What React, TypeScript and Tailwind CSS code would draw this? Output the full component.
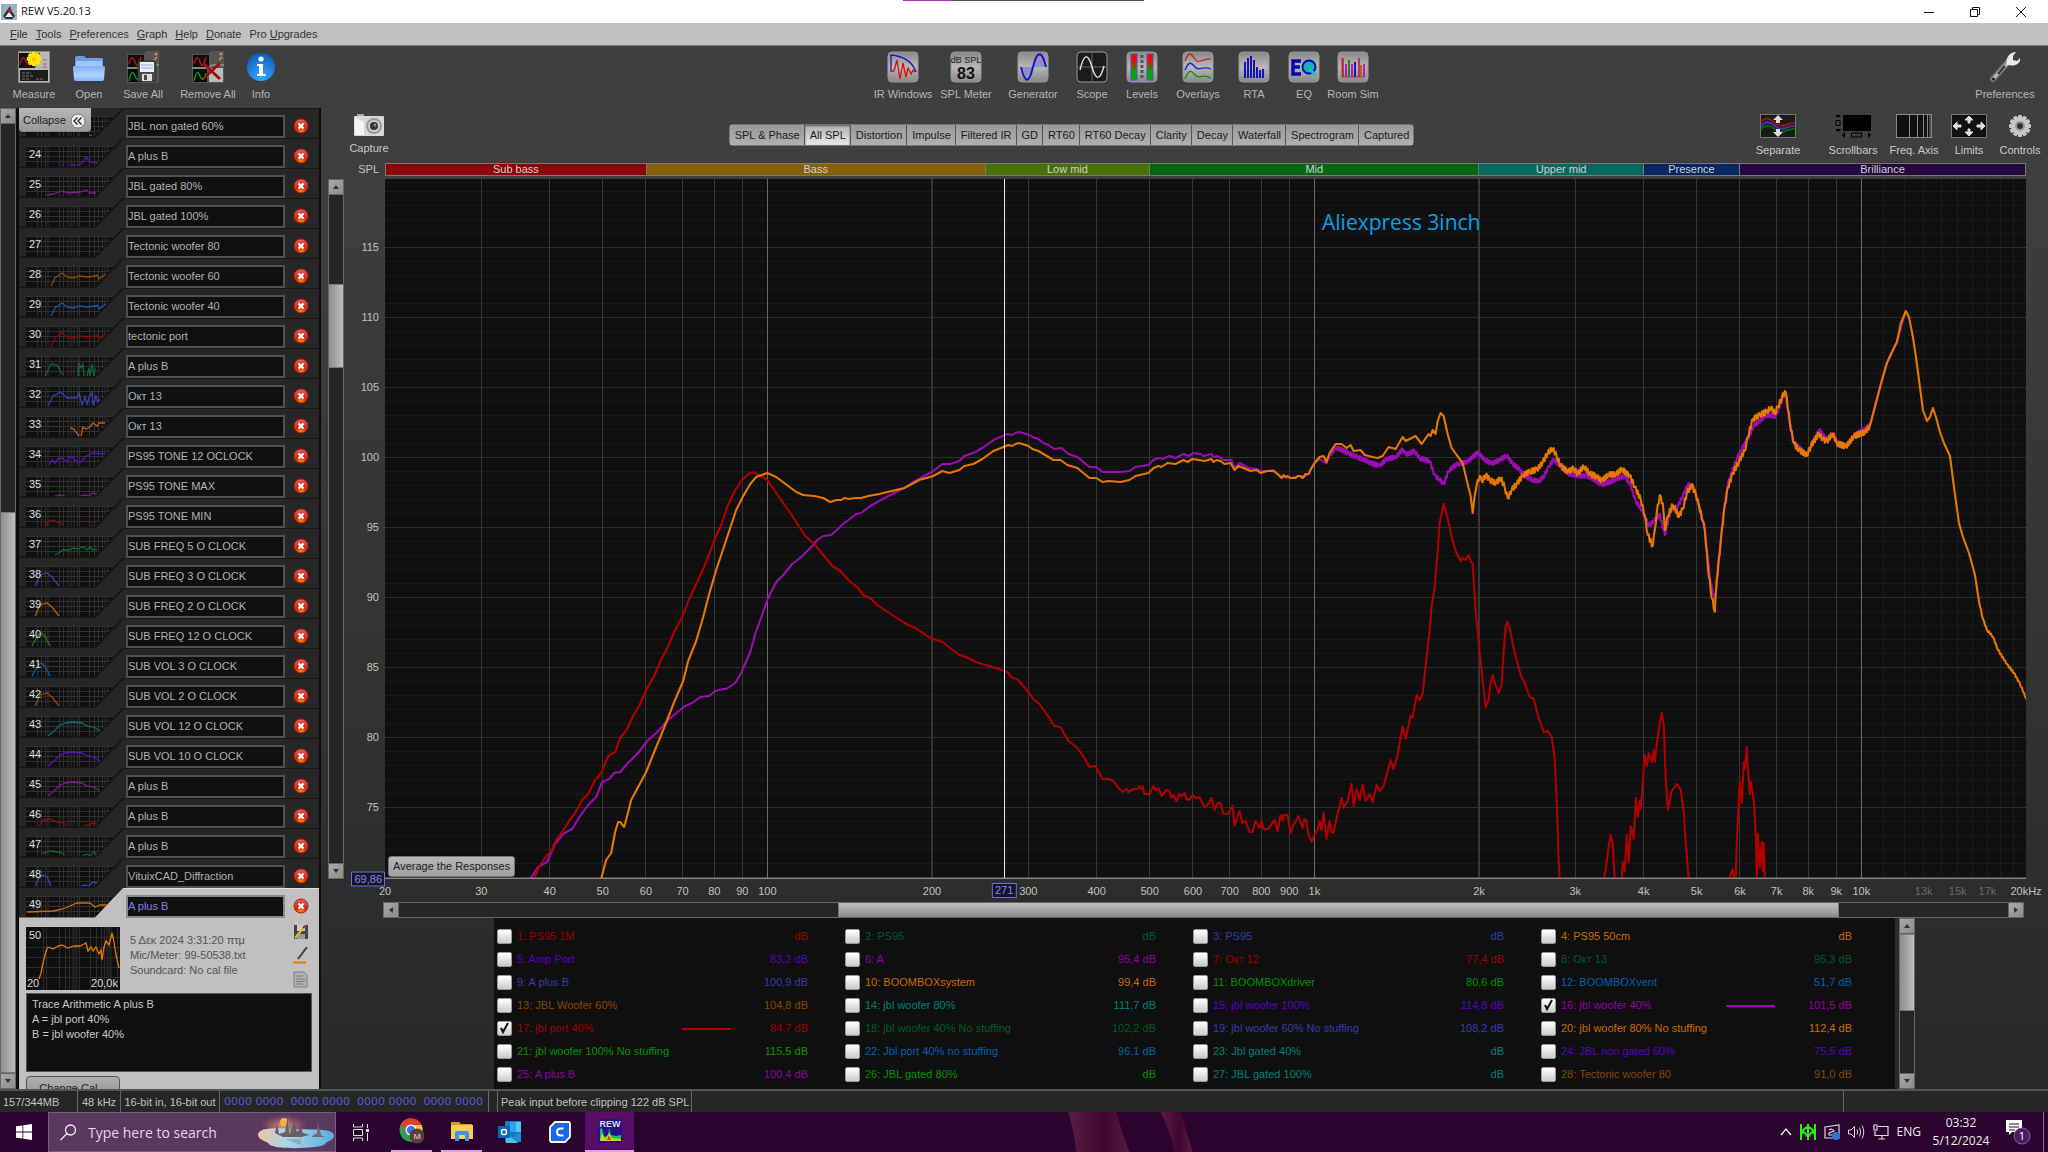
import { ReactNode } from "react";
import clsx from "clsx";

const TOP_DB = 119.86;
const BOTTOM_DB = 69.86;

const freqToPercent = (f: number) => (Math.log10(f / 20) / 3) * 100;
const dbToPercent = (db: number) =>
    ((TOP_DB - db) / (TOP_DB - BOTTOM_DB)) * 100;

const RED = "#b00000";
const ORANGE = "#e67800";
const MAGENTA = "#9b0cb4";

// traces are "x,y" pairs on a 1640 x 700 plot
const redMain =
    "149,700 154,688 159,680 166,672 171,661 177,653 184,642 190,634 197,621 203,615 210,601 216,594 223,577 230,573 235,559 242,550 248,537 254,527 261,511 269,497 275,483 282,469 289,453 298,436 304,420 311,405 318,390 324,375 330,359 336,346 342,328 349,313 356,302 362,296 367,293 374,296 382,301 391,314 405,334 420,357 429,365 438,376 447,387 454,391 465,403 472,408 478,416 485,419 492,426 510,438 521,445 530,449 545,459 557,463 566,470 574,476 581,478 588,482 597,485 610,489 622,493 627,499 632,500 643,513 648,520 654,525 662,536 669,547 675,548 683,562 692,569 699,579 704,588 710,587 717,600 723,600 728,602 732,608 737,613 741,610 743,613 748,610 752,610 754,607 756,610 757,607 759,615 764,615 768,607 770,611 773,609 776,617 781,611 784,612 786,619 788,616 791,622 794,615 796,617 799,614 801,620 804,621 807,616 810,619 814,618 819,628 822,626 826,619 829,631 832,624 835,624 838,635 842,635 847,627 849,647 854,632 857,644 860,642 864,653 867,653 870,642 874,649 876,642 878,650 883,650 886,645 889,641 892,652 895,636 897,641 898,636 902,636 905,654 907,648 913,637 917,649 919,640 921,642 923,656 926,663 929,655 932,651 934,642 936,651 938,634 941,660 944,642 946,653 948,654 951,639 956,619 958,629 962,622 966,605 968,627 971,610 974,621 977,606 980,622 984,615 987,623 991,606 994,612 998,607 1002,592 1005,581 1008,590 1012,576 1015,558 1017,547 1020,560 1025,537 1027,538 1031,516 1034,521 1037,515 1040,487 1044,451 1046,427 1049,408 1052,372 1054,344 1058,325 1062,339 1066,358 1070,372 1075,382 1077,379 1080,381 1083,376 1085,382 1087,385 1090,433 1094,474 1100,528 1103,521 1105,503 1107,496 1110,506 1113,514 1116,506 1118,472 1120,447 1122,443 1124,449 1129,474 1135,496 1139,504 1144,518 1148,520 1153,539 1158,553 1162,552 1166,558 1169,580 1171,622 1173,683 1174,700";
const redBumps = [
    "1218,700 1220,690 1223,667 1225,656 1227,665 1229,700",
    "1236,700 1237,683 1239,692 1241,656 1243,683 1245,647 1248,660 1250,619 1252,638 1254,622 1255,630 1257,604 1259,576 1261,587 1263,574 1266,583 1268,571 1269,583 1271,565 1274,544 1276,534 1278,546 1280,601 1282,631 1286,612 1291,605 1295,611 1298,633 1300,665 1303,700",
    "1343,700 1347,690 1348,699 1350,697 1351,662 1354,603 1356,624 1358,583 1359,590 1361,568 1362,589 1364,615 1365,603 1368,622 1370,658 1371,700 1372,655 1374,689 1376,663 1377,692 1378,664 1379,700",
];
const orangeTrace =
    "216,700 221,681 226,674 230,653 233,643 235,643 239,648 241,641 246,621 253,608 261,593 269,573 276,556 282,541 289,523 298,502 303,482 311,462 318,438 324,415 331,391 338,370 345,349 351,331 358,317 365,305 371,298 382,294 391,298 403,307 411,313 418,316 429,317 438,319 445,323 451,321 456,321 459,319 464,320 470,319 476,319 483,317 494,315 519,309 534,301 548,297 557,292 564,294 574,291 579,287 588,285 597,280 608,272 623,266 627,267 630,265 633,264 637,265 643,267 647,270 653,272 663,278 668,281 675,281 682,286 692,289 698,294 704,299 711,299 717,303 723,302 735,303 744,301 750,297 763,294 768,289 773,287 776,288 782,284 790,285 798,281 802,283 807,280 813,281 819,282 826,280 828,283 831,281 835,282 839,285 845,284 849,291 853,287 858,289 865,292 871,291 875,294 882,292 888,292 892,295 896,299 898,296 900,298 902,297 905,299 910,299 912,297 915,297 917,299 920,295 923,295 926,289 930,283 934,278 938,277 941,283 944,274 950,265 956,265 961,269 965,266 968,272 975,271 979,276 987,278 992,279 997,277 1003,268 1010,270 1017,258 1020,262 1030,257 1036,265 1043,255 1045,257 1047,251 1050,255 1052,242 1055,234 1058,237 1062,255 1066,269 1071,276 1077,284 1082,305 1085,317 1087,334 1089,317 1092,301 1094,297 1096,302 1100,296 1104,301 1110,305 1115,299 1119,308 1122,319 1126,310 1131,305 1137,297 1144,293 1151,290 1157,283 1162,274 1167,270 1171,278 1175,287 1182,292 1188,289 1192,295 1198,288 1204,295 1211,297 1216,301 1223,296 1230,296 1236,290 1244,296 1249,308 1255,321 1259,337 1262,356 1267,367 1269,351 1271,333 1274,316 1277,324 1279,351 1282,337 1287,326 1293,338 1297,330 1301,314 1306,305 1310,315 1313,326 1317,342 1319,351 1322,387 1325,413 1329,433 1331,401 1335,362 1338,333 1342,308 1347,294 1353,283 1359,272 1362,258 1367,240 1374,235 1381,233 1385,229 1389,235 1392,228 1396,219 1399,212 1401,219 1404,244 1408,264 1413,271 1421,277 1425,267 1433,254 1437,260 1441,262 1447,255 1451,265 1460,267 1468,257 1479,254 1484,247 1490,224 1496,201 1501,184 1506,173 1511,163 1515,144 1520,132 1523,138 1527,158 1530,178 1534,208 1537,231 1541,242 1544,238 1547,229 1550,238 1554,253 1558,264 1564,277 1568,308 1573,344 1577,358 1583,374 1589,396 1593,422 1597,440 1601,451 1607,458 1612,471 1621,485 1628,494 1634,505 1641,522";
const magentaTrace =
    "145,700 153,688 162,683 170,665 178,655 187,650 195,637 203,626 211,618 217,603 224,600 229,594 235,593 242,585 253,574 262,562 271,554 282,542 291,534 300,527 307,524 315,518 324,517 330,512 338,510 341,510 350,504 356,494 365,473 371,452 378,433 382,421 391,403 398,396 407,385 416,378 427,367 432,361 438,357 446,356 458,345 471,335 476,334 485,327 503,317 519,309 528,303 548,292 557,285 565,285 574,282 579,277 590,273 597,269 610,260 622,255 627,256 630,254 634,253 644,256 647,258 653,260 658,264 663,266 669,270 676,269 683,275 692,278 698,283 704,288 711,288 717,293 735,293 744,292 750,288 763,286 768,281 773,279 777,280 784,277 790,279 798,275 803,277 808,274 815,275 818,277 826,275 828,278 832,277 838,281 846,281 849,289 854,284 863,289 872,290 875,292 882,292 888,291 892,295 896,298 905,299 915,297 917,299 923,295 929,283 934,280 940,284 944,276 950,269 963,274 972,278 984,284 994,286 1001,280 1010,279 1017,270 1020,275 1029,272 1034,280 1044,282 1049,296 1054,300 1058,305 1063,292 1072,285 1082,282 1092,274 1099,281 1106,284 1114,281 1121,277 1127,285 1134,290 1139,296 1146,301 1153,303 1159,296 1163,287 1168,280 1175,288 1182,295 1201,297 1216,305 1230,301 1239,297 1245,306 1250,322 1256,331 1263,347 1268,342 1274,335 1279,356 1285,331 1292,328 1297,317 1302,305 1307,307 1310,315 1313,326 1317,342 1319,351 1322,380 1325,405 1329,422 1331,400 1335,360 1338,332 1342,304 1351,280 1356,270 1362,260 1368,246 1380,237 1390,237 1399,213 1404,244 1408,264 1421,276 1433,251 1441,261 1447,254 1451,265 1460,268 1468,257 1484,246 1501,184 1511,163 1520,131";

// fills the stretch between two x positions with measurement noise
function addNoise(trace: string, from: number, to: number, amp: number) {
    const points = trace.split(" ").map((p) => p.split(",").map(Number));
    const out: string[] = [];
    let n = 0;
    points.forEach(([x, y], i) => {
        const next = points[i + 1];
        out.push(`${x},${y}`);
        if (!next || x < from || x > to) return;
        const steps = Math.max(1, Math.round(next[0] - x));
        for (let s = 1; s < steps; s++) {
            n++;
            const t = s / steps;
            const wobble =
                (n % 2 ? 1 : -1) * amp * (0.5 + 0.5 * Math.abs(Math.sin(n * 1.7)));
            out.push(
                `${(x + (next[0] - x) * t).toFixed(1)},${(y + (next[1] - y) * t + wobble).toFixed(1)}`
            );
        }
    });
    return out.join(" ");
}

const bands = [
    { name: "Sub bass", from: 20, to: 60, color: "bg-[#8b0808]" },
    { name: "Bass", from: 60, to: 250, color: "bg-[#846108]" },
    { name: "Low mid", from: 250, to: 500, color: "bg-[#4a7008]" },
    { name: "Mid", from: 500, to: 2000, color: "bg-[#066616]" },
    { name: "Upper mid", from: 2000, to: 4000, color: "bg-[#086860]" },
    { name: "Presence", from: 4000, to: 6000, color: "bg-[#08265f]" },
    { name: "Brilliance", from: 6000, to: 20000, color: "bg-[#260840]" },
];

const freqLabels: [number, string][] = [
    [20, "20"], [30, "30"], [40, "40"], [50, "50"], [60, "60"], [70, "70"],
    [80, "80"], [90, "90"], [100, "100"], [200, "200"], [300, "300"],
    [400, "400"], [500, "500"], [600, "600"], [700, "700"], [800, "800"],
    [900, "900"], [1000, "1k"], [2000, "2k"], [3000, "3k"], [4000, "4k"],
    [5000, "5k"], [6000, "6k"], [7000, "7k"], [8000, "8k"], [9000, "9k"],
    [10000, "10k"], [13000, "13k"], [15000, "15k"], [17000, "17k"],
    [20000, "20kHz"],
];

const wide = "M32 28L36 20L43 15L48 19L54 20L60 18L68 19L76 18L78 17L80 21L87 16";
const hump = "M16 28L21 17L28 15L33 19L40 28";
const leftHump = "M13 28L19 17L23 15L27 20L31 28";
const vol = "M29 28L35 23L41 17L47 15L53 14L63 15L68 18L75 19L81 23";

const measurements = [
    { no: "", name: "JBL non gated 60%", color: "#00827a", d: "M70 28L73 27" },
    { no: "24", name: "A plus B", color: "#5a10c8", d: "M43 28L45 27M52 28L54 26L57 28M59 27L63 25L67 19L71 24L78 25" },
    { no: "25", name: "JBL gated 80%", color: "#8a1496", d: "M28 27L34 26L43 23L49 25L61 24L67 22L71 25L77 25" },
    { no: "26", name: "JBL gated 100%", color: "#8a1496", d: "" },
    { no: "27", name: "Tectonic woofer 80", color: "#8a1496", d: "" },
    { no: "28", name: "Tectonic woofer 60", color: "#8c4a08", d: wide },
    { no: "29", name: "Tectonic woofer 40", color: "#0a5cae", d: wide },
    { no: "30", name: "tectonic port", color: "#8c0808", d: wide },
    { no: "31", name: "A plus B", color: "#08693a", d: "M26 28L32 16L38 17L44 27M59 28L60 15L62 20L64 16L65 28M68 28L70 20L71 28L73 16L75 28L76 20" },
    { no: "32", name: "Окт 13", color: "#3c3cae", d: "M29 28L34 18L42 14L48 20L58 20L60 15L63 27L66 19L68 26L70 20L73 14L74 27L77 18L79 24L81 21" },
    { no: "33", name: "Окт 13", color: "#b46208", d: "M51 20L55 21L60 28M62 28L64 19L67 21L71 19L74 15L78 18L80 15L86 15" },
    { no: "34", name: "PS95 TONE 12 OCLOCK", color: "#5a10c8", d: "M30 27L33 22L36 25L39 21L43 20L48 24L50 19L53 19L58 24L62 24L66 19L73 15L86 16" },
    { no: "35", name: "PS95 TONE MAX", color: "#7a1486", d: "M36 28L41 27L46 28M61 28L66 27L71 28L73 25L78 26" },
    { no: "36", name: "PS95 TONE MIN", color: "#960808", d: "M26 28L29 24L34 22L45 27M73 28L76 27" },
    { no: "37", name: "SUB FREQ 5 O CLOCK", color: "#08693a", d: "M36 27L44 22L50 22L54 20L58 21L64 19L68 22L71 19L74 22L78 21" },
    { no: "38", name: "SUB FREQ 3 O CLOCK", color: "#3c3cae", d: hump },
    { no: "39", name: "SUB FREQ 2 O CLOCK", color: "#b46208", d: hump },
    { no: "40", name: "SUB FREQ 12 O CLOCK", color: "#0a8a0a", d: leftHump },
    { no: "41", name: "SUB VOL 3 O CLOCK", color: "#0a5cae", d: leftHump },
    { no: "42", name: "SUB VOL 2 O CLOCK", color: "#8c4a08", d: hump },
    { no: "43", name: "SUB VOL 12 O CLOCK", color: "#086e68", d: vol },
    { no: "44", name: "SUB VOL 10 O CLOCK", color: "#5a10c8", d: vol },
    { no: "45", name: "A plus B", color: "#8a1496", d: vol },
    { no: "46", name: "A plus B", color: "#960808", d: "M20 28L24 22L31 21L38 24L45 25L47 28M64 28L67 27L70 28L73 25L78 26" },
    { no: "47", name: "A plus B", color: "#08693a", d: "M23 26L31 23L40 24L46 27M64 28L67 26L71 28L75 24L78 27" },
    { no: "48", name: "VituixCAD_Diffraction", color: "#3c3cae", d: "M16 28L20 20L24 17L28 19L32 28M62 28L67 27L70 28L74 24L78 25" },
    { no: "49", name: "A plus B", color: "#c86c08", d: "M8 24L34 23L44 21L51 18L58 15L66 15L71 15L76 19L81 17L88 17" },
];

const palette = {
    red: "text-[#a00000]",
    green: "text-[#055a2e]",
    blue: "text-[#3a3aac]",
    orange: "text-[#cc6a00]",
    violet: "text-[#5a00c8]",
    magenta: "text-[#9400a6]",
    lime: "text-[#009400]",
    azure: "text-[#0060b4]",
    brown: "text-[#884600]",
    teal: "text-[#008078]",
};

type Legend = { name: string; value: string; color: keyof typeof palette; line?: string };

const legend: Legend[] = [
    { name: "1: PS95 1M", value: "dB", color: "red" },
    { name: "2: PS95", value: "dB", color: "green" },
    { name: "3: PS95", value: "dB", color: "blue" },
    { name: "4: PS95 50cm", value: "dB", color: "orange" },
    { name: "5: Amp Port", value: "83,2 dB", color: "violet" },
    { name: "6: A", value: "95,4 dB", color: "magenta" },
    { name: "7: Окт 12", value: "77,4 dB", color: "red" },
    { name: "8: Окт 13", value: "95,3 dB", color: "green" },
    { name: "9: A plus B", value: "100,9 dB", color: "blue" },
    { name: "10: BOOMBOXsystem", value: "99,4 dB", color: "orange" },
    { name: "11: BOOMBOXdriver", value: "80,6 dB", color: "lime" },
    { name: "12: BOOMBOXvent", value: "51,7 dB", color: "azure" },
    { name: "13: JBL Woofer 60%", value: "104,8 dB", color: "brown" },
    { name: "14: jbl woofer 80%", value: "111,7 dB", color: "teal" },
    { name: "15: jbl woofer 100%", value: "114,8 dB", color: "violet" },
    { name: "16: jbl woofer 40%", value: "101,5 dB", color: "magenta", line: "bg-[#a800c0]" },
    { name: "17: jbl port 40%", value: "84,7 dB", color: "red", line: "bg-[#b40000]" },
    { name: "18: jbl woofer 40% No stuffing", value: "102,2 dB", color: "green" },
    { name: "19: jbl woofer 60% No stuffing", value: "108,2 dB", color: "blue" },
    { name: "20: jbl woofer 80% No stuffing", value: "112,4 dB", color: "orange" },
    { name: "21: jbl woofer 100% No stuffing", value: "115,5 dB", color: "lime" },
    { name: "22: Jbl port 40% no stuffing", value: "96,1 dB", color: "azure" },
    { name: "23: Jbl gated 40%", value: "dB", color: "teal" },
    { name: "24: JBL non gated 60%", value: "75,5 dB", color: "violet" },
    { name: "25: A plus B", value: "100,4 dB", color: "magenta" },
    { name: "26: JBL gated 80%", value: "dB", color: "lime" },
    { name: "27: JBL gated 100%", value: "dB", color: "teal" },
    { name: "28: Tectonic woofer 80", value: "91,0 dB", color: "brown" },
];

/* ---------- toolbar icons ---------- */

function MiniPanel({ children }: { children?: ReactNode }) {
    return (
        <svg width="32" height="32" viewBox="0 0 32 32">
            <path d="M0 3H16L20 0H32V32H0Z" fill="#555" />
            <rect x="1" y="4" width="16" height="12" fill="#0c0c0c" />
            <path d="M2 13C4 5 6 5 8 11S12 14 14 6" fill="none" stroke="#c01010" strokeWidth="1.5" />
            <path d="M0 17H16L20 14H32" stroke="#b8b8b8" fill="none" />
            <rect x="1" y="18" width="14" height="13" fill="#0c0c0c" />
            <path d="M2 30C4 20 6 20 8 25S12 29 14 22" fill="none" stroke="#109010" strokeWidth="1.5" />
            <circle cx="29" cy="3" r="1.5" fill="#d08080" />
            <path d="M27 9l3-3" stroke="#c8a020" strokeWidth="1.5" />
            {children}
        </svg>
    );
}

function MeasureIcon() {
    return (
        <svg width="32" height="32" viewBox="0 0 32 32">
            <rect x=".5" y=".5" width="31" height="31" fill="#b8b8b8" stroke="#8a8a8a" />
            <path d="M1 2H22L17 17H1Z" fill="#111" />
            <path d="M2 14C4 5 6 5 8 10S13 16 16 8" fill="none" stroke="#b01010" strokeWidth="1.5" />
            <rect x="2" y="19" width="28" height="11" fill="#1c1c1c" />
            <path d="M4 22h9M4 25h12M4 28h8M18 28h7" stroke="#777" strokeDasharray="3 1" />
            <circle cx="28" cy="3" r="1.5" fill="#f0a0a0" />
            <path d="M25 9h4M25 13h4M25 16h4" stroke="#a06060" />
            <g fill="#ffe600">
                <circle cx="16" cy="8" r="5" />
                {[0, 45, 90, 135, 180, 225, 270, 315].map((a) => (
                    <circle key={a} cx="16" cy="3" r="2.4" transform={`rotate(${a} 16 8)`} />
                ))}
            </g>
            <circle cx="16" cy="8" r="2" fill="#ffb800" />
        </svg>
    );
}

function OpenIcon() {
    return (
        <svg width="32" height="32" viewBox="0 0 32 32">
            <defs>
                <linearGradient id="folder" x1="0" y1="0" x2="0" y2="1">
                    <stop offset="0" stopColor="#7db0f8" />
                    <stop offset=".6" stopColor="#b0d2ff" />
                    <stop offset="1" stopColor="#82b2f4" />
                </linearGradient>
            </defs>
            <path d="M2 6L4 5H11L13 7H29Q30 7 30 9V20H2Z" fill="#6a9ce8" />
            <path d="M3 10H29V18H3Z" fill="#a4c4f4" />
            <path d="M0 16Q0 15 2 15H30Q32 15 32 16L31 28Q31 30 29 30H3Q1 30 1 28Z" fill="url(#folder)" />
        </svg>
    );
}

function InfoIcon() {
    return (
        <svg width="32" height="32" viewBox="0 0 32 32">
            <defs>
                <radialGradient id="info" cx=".5" cy=".85" r=".9">
                    <stop offset="0" stopColor="#38a8ff" />
                    <stop offset="1" stopColor="#0858b8" />
                </radialGradient>
            </defs>
            <circle cx="16" cy="16" r="14" fill="url(#info)" />
            <circle cx="16" cy="8" r="2.6" fill="#fff" />
            <path d="M12 13H18V23H20.500V25H12V23H14V15H12Z" fill="#fff" />
        </svg>
    );
}

function Tile({ children, dark }: { children: ReactNode; dark?: boolean }) {
    return (
        <svg width="32" height="32" viewBox="0 0 32 32">
            <defs>
                <linearGradient id="tile" x1="0" y1="0" x2="0" y2="1">
                    <stop offset="0" stopColor="#888" />
                    <stop offset=".5" stopColor="#b8b8b8" />
                    <stop offset="1" stopColor="#888" />
                </linearGradient>
            </defs>
            <rect x="1" y="1" width="30" height="30" rx="4" fill={dark ? "#1c1c1c" : "url(#tile)"} stroke="#999" />
            {children}
        </svg>
    );
}

const leftTools = [
    { label: "Measure", width: "w-[60px]", icon: <MeasureIcon /> },
    { label: "Open", width: "w-[50px]", icon: <OpenIcon /> },
    {
        label: "Save All",
        width: "w-[58px]",
        icon: (
            <MiniPanel>
                <path d="M11 10H27L29 12V30H11Z" fill="#4a4a4a" stroke="#333" />
                <rect x="13" y="11" width="14" height="10" fill="#e8f0f8" />
                <path d="M14 14h12M14 17h12" stroke="#8aa8d0" />
                <rect x="15" y="23" width="10" height="7" fill="#ddd" />
                <rect x="17" y="24" width="3" height="5" fill="#444" />
            </MiniPanel>
        ),
    },
    {
        label: "Remove All",
        width: "w-[72px]",
        icon: (
            <MiniPanel>
                <rect x="17" y="17" width="14" height="14" fill="#bbb" />
                <path d="M12 13L28 28M28 12L12 27" stroke="#a01010" strokeWidth="3" />
            </MiniPanel>
        ),
    },
    { label: "Info", width: "w-[34px]", icon: <InfoIcon /> },
];

const centerTools = [
    {
        label: "IR Windows",
        width: "w-[62px]",
        icon: (
            <Tile>
                <path d="M4 21V4C16 5 25 10 29 21" fill="none" stroke="#1818c0" strokeWidth="1.3" />
                <path d="M4 20H7L10 9L13 28L16 12L19 26L21 17L24 23L26 19L28 21" fill="none" stroke="#d81010" strokeWidth="1.3" />
            </Tile>
        ),
    },
    {
        label: "SPL Meter",
        width: "w-[64px]",
        icon: (
            <Tile>
                <text x="16" y="12" textAnchor="middle" fontSize="9" fontFamily="Liberation Sans, sans-serif" fill="#222">dB SPL</text>
                <text x="16" y="28" textAnchor="middle" fontSize="16" fontWeight="bold" fontFamily="Liberation Sans, sans-serif" fill="#111">83</text>
            </Tile>
        ),
    },
    {
        label: "Generator",
        width: "w-[70px]",
        icon: (
            <Tile>
                <path d="M4 16C8 33 12 33 16 16Z" fill="#8c90c8" />
                <path d="M16 16C20 -1 25 -1 29 16Z" fill="#8c90c8" />
                <path d="M4 16C8 33 12 33 16 16S25 -1 29 16" fill="none" stroke="#1010c0" strokeWidth="1.8" />
            </Tile>
        ),
    },
    {
        label: "Scope",
        width: "w-[48px]",
        icon: (
            <Tile dark>
                <path d="M16 1V31M1 16H31" stroke="#666" />
                <path d="M4 19C8 2 12 2 16 16S24 30 28 15" fill="none" stroke="#ddd" strokeWidth="1.5" />
            </Tile>
        ),
    },
    {
        label: "Levels",
        width: "w-[52px]",
        icon: (
            <Tile>
                <defs>
                    <linearGradient id="meter" x1="0" y1="0" x2="0" y2="1">
                        <stop offset=".2" stopColor="#f00" />
                        <stop offset=".7" stopColor="#0a0" />
                    </linearGradient>
                </defs>
                <rect x="5" y="3" width="6" height="26" fill="url(#meter)" stroke="#5050d0" />
                <rect x="21" y="3" width="6" height="26" fill="url(#meter)" stroke="#5050d0" />
                <path d="M16 4V28" stroke="#555" strokeWidth="3" strokeDasharray="3 2" />
            </Tile>
        ),
    },
    {
        label: "Overlays",
        width: "w-[60px]",
        icon: (
            <Tile>
                <path d="M3 10C7 0 9 2 13 8S20 7 29 8" fill="none" stroke="#c82020" strokeWidth="1.3" />
                <path d="M3 19C7 10 9 11 13 16S20 14 29 18" fill="none" stroke="#2020c8" strokeWidth="1.3" />
                <path d="M3 28C7 18 9 19 13 24S20 22 29 27" fill="none" stroke="#109010" strokeWidth="1.3" />
            </Tile>
        ),
    },
    {
        label: "RTA",
        width: "w-[52px]",
        icon: (
            <Tile>
                <path d="M7 27V11M10 27V7M13 27V5M16 27V9M19 27V16M22 27V19M25 27V18" stroke="#1414b4" strokeWidth="2" />
            </Tile>
        ),
    },
    {
        label: "EQ",
        width: "w-[48px]",
        icon: (
            <Tile>
                <path d="M13 10H5V23H13M5 16H12" fill="none" stroke="#0808b0" strokeWidth="3.500" />
                <circle cx="21" cy="16" r="6.500" fill="#18b0b0" stroke="#0808b0" strokeWidth="2" />
                <path d="M21 18L28 24" stroke="#18c0c0" strokeWidth="3" />
            </Tile>
        ),
    },
    {
        label: "Room Sim",
        width: "w-[50px]",
        icon: (
            <Tile>
                <path d="M5 7V26H27" fill="none" stroke="#a04040" />
                <path d="M6 26V7M22 26V7" stroke="#c01818" strokeWidth="1.500" />
                <path d="M9 26V13M15 26V13M27 26V13" stroke="#c010c0" strokeWidth="2" />
                <path d="M12 26V9" stroke="#109010" strokeWidth="2" />
                <path d="M18 26V11" stroke="#1818c0" strokeWidth="2" />
                <path d="M24 26V14" stroke="#a07010" strokeWidth="2" />
            </Tile>
        ),
    },
];

const graphTools = [
    {
        label: "Separate",
        width: "w-[90px]",
        icon: (
            <svg width="36" height="24" viewBox="0 0 36 24">
                <rect x=".5" y=".5" width="35" height="23" fill="#1a1a1a" stroke="#777" />
                <path d="M1 8C8 0 12 8 18 11S28 8 35 9" fill="none" stroke="#a01010" strokeWidth="2" />
                <path d="M1 12C8 4 12 11 18 14S28 11 35 12" fill="none" stroke="#3838b0" strokeWidth="2" />
                <path d="M1 15C8 8 12 14 18 17S28 14 35 15" fill="none" stroke="#0c600c" strokeWidth="2" />
                <path d="M18 1l5 5h-3v3h-4V6h-3zM18 23l5-5h-3v-3h-4v3h-3z" fill="#ddd" />
            </svg>
        ),
    },
    {
        label: "Scrollbars",
        width: "w-[60px]",
        icon: (
            <svg width="36" height="24" viewBox="0 0 36 24">
                <rect x="8" y="1" width="28" height="16" fill="#000" />
                <path d="M3 0l3 3H0zM3 18l3-3H0zM7 21l3-3v6zM36 21l-3-3v6z" fill="#000" />
                <path d="M1 6.500h4v5H1zM16.500 19h10v4h-10z" fill="none" stroke="#000" />
            </svg>
        ),
    },
    {
        label: "Freq. Axis",
        width: "w-[62px]",
        icon: (
            <svg width="36" height="24" viewBox="0 0 36 24">
                <rect x=".5" y=".5" width="35" height="23" fill="#111" stroke="#888" />
                <path d="M13.500 0V24M21.500 0V24M27.500 0V24M31.500 0V24M34 0V24" stroke="#888" />
            </svg>
        ),
    },
    {
        label: "Limits",
        width: "w-[48px]",
        icon: (
            <svg width="36" height="24" viewBox="0 0 36 24">
                <rect x=".5" y=".5" width="35" height="23" fill="#111" stroke="#777" />
                <path d="M18 2l4 4h-3v3h-2V6h-3zM18 22l4-4h-3v-3h-2v3h-3zM2 12l4-4v3h4v2H6v3zM34 12l-4-4v3h-4v2h4v3z" fill="#ddd" stroke="#ddd" />
            </svg>
        ),
    },
    {
        label: "Controls",
        width: "w-[54px]",
        icon: (
            <svg width="24" height="24" viewBox="0 0 24 24">
                <g fill="#c8c8c8">
                    {[0, 30, 60, 90, 120, 150].map((a) => (
                        <rect key={a} x="10" y="1" width="4" height="22" rx="1" transform={`rotate(${a} 12 12)`} />
                    ))}
                    <circle cx="12" cy="12" r="9" />
                </g>
                <circle cx="12" cy="12" r="5" fill="#999" />
                <circle cx="12" cy="12" r="3" fill="#333" />
            </svg>
        ),
    },
];

const tabs = [
    "SPL & Phase", "All SPL", "Distortion", "Impulse", "Filtered IR", "GD",
    "RT60", "RT60 Decay", "Clarity", "Decay", "Waterfall", "Spectrogram",
    "Captured",
];

function ToolButton({ label, icon, width }: { label: string; icon: ReactNode; width: string }) {
    return (
        <button className={clsx("flex flex-col items-center gap-[3px] whitespace-nowrap text-[#b4b4b4]", width)}>
            {icon}
            <span className="leading-4">{label}</span>
        </button>
    );
}

function ArrowButton({ dir }: { dir: "up" | "down" | "left" | "right" }) {
    const paths = {
        up: "M1 6L4 2L7 6Z",
        down: "M1 2L4 6L7 2Z",
        left: "M6 1L2 4L6 7Z",
        right: "M2 1L6 4L2 7Z",
    };
    return (
        <button
            aria-label={`Scroll ${dir}`}
            className="flex size-4 shrink-0 items-center justify-center border border-[#666] bg-gradient-to-br from-[#a8a8a8] to-[#8c8c8c]"
        >
            <svg width="8" height="8" viewBox="0 0 8 8">
                <path d={paths[dir]} fill="#333" />
            </svg>
        </button>
    );
}

function VerticalScroll({ before, thumb, after, className }: { before: string; thumb: string; after: string; className?: string }) {
    return (
        <div className={clsx("flex w-4 shrink-0 flex-col bg-[#262626]", className)}>
            <ArrowButton dir="up" />
            <div className="flex flex-1 flex-col border-x border-[#666]">
                <div className={before} />
                <div className={clsx("border-y border-[#777] bg-gradient-to-r from-[#8c8c8c] to-[#c0c0c0]", thumb)} />
                <div className={after} />
            </div>
            <ArrowButton dir="down" />
        </div>
    );
}

function DeleteIcon() {
    return (
        <svg width="16" height="16" viewBox="0 0 16 16">
            <defs>
                <radialGradient id="del" cx=".5" cy=".9" r=".9">
                    <stop offset="0" stopColor="#ff8a10" />
                    <stop offset=".45" stopColor="#cc2808" />
                    <stop offset="1" stopColor="#e06868" />
                </radialGradient>
            </defs>
            <circle cx="8" cy="8" r="7" fill="url(#del)" stroke="#b81414" />
            <path d="M5.500 5.500L10.500 10.500M10.500 5.500L5.500 10.500" stroke="#fff" strokeWidth="2.200" />
        </svg>
    );
}

/* ---------- measurement list ---------- */

function MeasurementRow({ no, name, color, d, selected }: { no: string; name: string; color: string; d: string; selected: boolean }) {
    return (
        <li className="flex h-[30px] shrink-0">
            <svg width="105" height="30" viewBox="0 0 105 30" className="shrink-0">
                {selected && <path d="M0 29.500H76L104 0H105V30H0Z" fill="#c0c0c0" />}
                <path d="M7 8H95L76 29H7Z" fill="#101010" />
                <path
                    d="M7 8.500H94M7 13.500H90M7 18.500H86M7 23.500H81M18.500 8V29M22.500 8V29M26.500 8V29M29 8V29M40.500 8V29M44.500 8V29M49 8V29M52 8V29M55 8V29M58.500 8V29M60.500 8V29M70.500 8V29M75.500 8V29M79.500 8V24M83.500 8V20M86 8V17M89 8V14"
                    stroke="#303030"
                    fill="none"
                />
                <path d={d} fill="none" stroke={color} strokeWidth="1.300" />
                {!selected && <path d="M0 29.500H76L104 .500" fill="none" stroke="#161616" strokeWidth="2" />}
                <text x="10" y="20" fontSize="11" fill="#ddd" fontFamily="Liberation Sans, sans-serif">{no}</text>
            </svg>
            <div
                className={clsx(
                    "flex flex-1 items-center gap-2 border-t pt-[5px] pl-[2px]",
                    selected ? "border-[#e0e0e0] bg-[#c0c0c0]" : "border-[#161616]"
                )}
            >
                <input
                    aria-label={`Measurement ${no} name`}
                    defaultValue={name}
                    className={clsx(
                        "h-[23px] w-[159px] border-2 bg-[#101010]",
                        selected ? "border-[#8a8a8a] text-[#8080e0]" : "border-[#505050] text-[#b0b0b0]"
                    )}
                />
                <button aria-label="Remove measurement">
                    <DeleteIcon />
                </button>
            </div>
        </li>
    );
}

function Sidebar() {
    return (
        <aside className="flex w-[321px] shrink-0 border-r-2 border-[#0e0e0e]">
            <VerticalScroll before="h-[388px]" thumb="flex-1" after="h-0" />
            <div className="relative flex flex-1 flex-col overflow-hidden border-l-[3px] border-[#0e0e0e] bg-[#262626]">
                <ul className="flex flex-col">
                    {measurements.map((m, i) => (
                        <MeasurementRow key={i} {...m} selected={m.no === "49"} />
                    ))}
                </ul>
                <div className="min-h-0 flex-1 overflow-hidden bg-[#c0c0c0] px-[7px] pt-[9px] text-[#555]">
                    <div className="flex">
                        <svg width="94" height="63" viewBox="0 0 94 63" className="shrink-0">
                            <rect width="94" height="63" fill="#101010" />
                            <path
                                d="M0 10.500H94M0 20.500H94M0 30.500H94M0 40.500H94M0 50.500H94M17.500 0V63M20.500 0V63M33.500 0V63M39.500 0V63M43.500 0V63M47 0V63M49 0V63M51 0V63M53.500 0V63M64.500 0V63M70.500 0V63M75.500 0V63M78.500 0V63M81 0V63M83 0V63M85 0V63M91.500 0V63"
                                stroke="#2c2c2c"
                            />
                            <path
                                d="M13 52L15 46L17 36L20 24L22 20L27 22L32 19L36 18L42 21L48 19L54 19L58 17L60 16L62 24L65 20L67 24L70 20L73 27L75 23L76 33L78 20L80 14L83 18L85 10L86 6L88 15L90 28L93 41"
                                fill="none"
                                stroke="#e07808"
                                strokeWidth="1.300"
                            />
                            <g fontSize="11" fill="#d8d8d8" fontFamily="Liberation Sans, sans-serif">
                                <text x="3" y="12">50</text>
                                <text x="1" y="60">20</text>
                                <text x="92" y="60" textAnchor="end">20,0k</text>
                            </g>
                        </svg>
                        <div className="flex-1 pt-[6px] pl-[10px] leading-[15px]">
                            <p>5 Δεκ 2024 3:31:20 πτμ</p>
                            <p>Mic/Meter: 99-50538.txt</p>
                            <p>Soundcard: No cal file</p>
                        </div>
                        <div className="-mt-[3px] mr-[3px] flex flex-col gap-[7px]">
                            <button aria-label="Save">
                                <svg width="16" height="16" viewBox="0 0 16 16">
                                    <path d="M1 1H15V15H1Z" fill="#444" />
                                    <rect x="4" y="1" width="8" height="6" fill="#ccc" />
                                    <rect x="4" y="10" width="8" height="5" fill="#999" />
                                    <path d="M2 14L12 2" stroke="#d8c030" strokeWidth="2" />
                                    <path d="M10 4L12 2" stroke="#c02020" strokeWidth="2" />
                                </svg>
                            </button>
                            <button aria-label="Trace colour">
                                <svg width="16" height="17" viewBox="0 0 16 17">
                                    <path d="M5 12L14 0" stroke="#444" strokeWidth="2" />
                                    <path d="M0 15.500H13" stroke="#e87808" strokeWidth="2" />
                                </svg>
                            </button>
                            <button aria-label="Notes">
                                <svg width="16" height="17" viewBox="0 0 16 17">
                                    <path d="M1 1H11L14 4V16H1Z" fill="#b0b0b0" stroke="#808080" />
                                    <path d="M3 5h7M3 8h9M3 10.500h9M3 13h7" stroke="#808080" />
                                </svg>
                            </button>
                        </div>
                    </div>
                    <textarea
                        aria-label="Notes"
                        className="mt-[3px] block h-[79px] w-full resize-none border border-[#555] bg-[#101010] px-[5px] py-[3px] leading-[15px] text-[#c8c8c8]"
                        defaultValue={"Trace Arithmetic A plus B\nA = jbl port 40%\nB = jbl woofer 40%"}
                    />
                    <button className="mt-1 h-6 w-[94px] rounded border border-[#555] bg-gradient-to-b from-[#b0b0b0] to-[#909090] text-[#222]">
                        Change Cal...
                    </button>
                </div>
                <button className="absolute top-0 left-0 flex h-6 w-[72px] items-center gap-1 rounded-b border-b border-[#888] bg-gradient-to-b from-[#b8b8b8] to-[#989898] pt-[2px] pl-1 text-[#222]">
                    Collapse
                    <svg width="16" height="16" viewBox="0 0 16 16">
                        <circle cx="8" cy="8" r="7" fill="#eee" stroke="#777" />
                        <path d="M7.500 4.500L4 8L7.500 11.500M11.500 4.500L8 8L11.500 11.500" fill="none" stroke="#222" strokeWidth="1.300" />
                    </svg>
                </button>
            </div>
        </aside>
    );
}

/* ---------- graph ---------- */

function Plot() {
    const x = (f: number) => (freqToPercent(f) / 100) * 1640;
    const y = (db: number) => (dbToPercent(db) / 100) * 700;
    const dbs = Array.from({ length: 50 }, (_, i) => 70 + i);
    const minor: number[] = [];
    const major: number[] = [];
    for (const decade of [10, 100, 1000, 10000]) {
        for (let n = 1; n < 10; n++) {
            const f = decade * n;
            if (f > 20 && f < 10000) major.push(f);
        }
    }
    for (let f = 11000; f < 20000; f += 1000) minor.push(f);

    return (
        <svg
            className="absolute inset-0 h-full w-full"
            viewBox="0 0 1640 700"
            preserveAspectRatio="none"
        >
            <rect width="1640" height="700" fill="#101010" />
            <g shapeRendering="crispEdges">
                {dbs.map((db) => (
                    <path key={db} d={`M0 ${y(db)}H1640`} stroke={db % 5 ? "#191919" : "#2d2d2d"} />
                ))}
                {minor.map((f) => (
                    <path key={f} d={`M${x(f)} 0V700`} stroke="#1c1c1c" />
                ))}
                {major.map((f) => (
                    <path key={f} d={`M${x(f)} 0V700`} stroke={f === 100 || f === 1000 ? "#6a6a6a" : "#363636"} />
                ))}
                <path d={`M${x(10000)} 0V700`} stroke="#6a6a6a" />
            </g>
            <g fill="none" strokeWidth="2.100" strokeLinejoin="round">
                <polyline points={addNoise(magentaTrace, 940, 1480, 2.4)} stroke={MAGENTA} />
                <polyline points={redMain} stroke={RED} />
                {redBumps.map((p) => (
                    <polyline key={p} points={p} stroke={RED} />
                ))}
                <polyline points={addNoise(addNoise(orangeTrace, 1090, 1480, 3), 1590, 1640, 1)} stroke={ORANGE} />
            </g>
            <path d={`M${x(271)} 0V700`} stroke="#e8e8e8" shapeRendering="crispEdges" />
            <path d="M0 699.500H1640" stroke="#888" strokeWidth="1.500" />
        </svg>
    );
}

function GraphHeader() {
    return (
        <div className="flex h-[55px] shrink-0 items-start pt-[6px]">
            <button className="ml-[26px] flex w-11 flex-col items-center gap-1 text-[#c8c8c8]">
                <svg width="32" height="22" viewBox="0 0 32 22">
                    <path d="M4 0H11V3H4Z" fill="#aaa" />
                    <rect x="1" y="2" width="30" height="20" rx="1" fill="#d8d8d8" />
                    <path d="M2 3L11 8V21H2Z" fill="#f4f4f4" />
                    <circle cx="21" cy="12" r="8" fill="#999" />
                    <circle cx="21" cy="12" r="6" fill="#ccc" />
                    <circle cx="21" cy="12" r="4" fill="#333" />
                    <circle cx="22" cy="11" r="1.500" fill="#889" />
                </svg>
                <span className="leading-4">Capture</span>
            </button>
            <nav className="flex flex-1 justify-center self-start pt-[10px] pl-[19px]">
                <div className="flex rounded-sm border border-[#777]">
                    {tabs.map((t) => (
                        <button
                            key={t}
                            className={clsx(
                                "h-5 border-r border-[#555] pt-px pr-1 pl-[5px] whitespace-nowrap text-[#1c1c1c] last:border-r-0",
                                t === "All SPL"
                                    ? "bg-gradient-to-b from-[#b0b0b0] to-[#e8e8e8] shadow-[inset_0_1px_2px_#555]"
                                    : "bg-gradient-to-b from-[#999] to-[#b0b0b0]"
                            )}
                        >
                            {t}
                        </button>
                    ))}
                </div>
            </nav>
            <div className="flex pr-px text-[#c8c8c8]">
                {graphTools.map((t) => (
                    <button key={t.label} className={clsx("flex flex-col items-center gap-1 whitespace-nowrap", t.width)}>
                        {t.icon}
                        <span className="leading-4">{t.label}</span>
                    </button>
                ))}
            </div>
        </div>
    );
}

function LegendItem({ item }: { item: Legend }) {
    return (
        <label className={clsx("flex h-[23px] items-center", palette[item.color])}>
            <span className="grid shrink-0 place-items-center">
                <input
                    type="checkbox"
                    defaultChecked={!!item.line}
                    className="peer col-start-1 row-start-1 size-[15px] appearance-none rounded-[2px] border border-[#999] bg-gradient-to-b from-[#fff] to-[#ccc]"
                />
                <svg
                    width="15"
                    height="15"
                    viewBox="0 0 15 15"
                    className="pointer-events-none col-start-1 row-start-1 opacity-0 peer-checked:opacity-100"
                >
                    <path d="M4 7L6 11L11 2" fill="none" stroke="#111" strokeWidth="2" />
                </svg>
            </span>
            <span className="w-[165px] shrink-0 pl-[5px] whitespace-nowrap">{item.name}</span>
            <span className={clsx("ml-[5px] h-[2px] w-[49px] shrink-0", item.line)} />
            <span className="w-[77px] shrink-0 text-right">{item.value}</span>
        </label>
    );
}

function GraphArea() {
    return (
        <main className="flex min-w-0 flex-1 flex-col bg-gradient-to-b from-[#404040] to-[#282828]">
            <GraphHeader />
            <div className="flex min-h-0 flex-1">
                <div className="flex w-16 shrink-0 flex-col pl-[7px]">
                    <div className="h-4 shrink-0 pr-[6px] text-right leading-3 text-[#c0c0c0]">SPL</div>
                    <div className="relative flex flex-1">
                        <VerticalScroll before="flex-[11_1_0%]" thumb="flex-[10_1_0%]" after="flex-[61_1_0%]" />
                        {[115, 110, 105, 100, 95, 90, 85, 80, 75].map((db) => (
                            <span
                                key={db}
                                className="absolute right-[6px] -translate-y-1/2 text-[#c0c0c0]"
                                style={{ top: `${dbToPercent(db)}%` }}
                            >
                                {db}
                            </span>
                        ))}
                        <span className="absolute right-0 bottom-0 z-10 translate-y-1/2 border border-[#7070d0] bg-[#14142a] px-[2px] leading-[13px] text-[#8888e0]">
                            69,86
                        </span>
                    </div>
                </div>
                <div className="mr-[22px] flex min-w-0 flex-1 flex-col">
                    <div className="mb-[3px] flex h-[13px] shrink-0 border-y border-l border-[#777] text-[#d0d0d0]">
                        {bands.map((b) => (
                            <div
                                key={b.name}
                                className={clsx("overflow-hidden border-r border-[#777] text-center leading-[11px]", b.color)}
                                style={{ width: `${freqToPercent(b.to) - freqToPercent(b.from)}%` }}
                            >
                                {b.name}
                            </div>
                        ))}
                    </div>
                    <div className="relative flex-1">
                        <Plot />
                        <p className="absolute top-[4%] left-[57.100%] font-['Open_Sans',sans-serif] text-[21px] text-[#08a0e6]">
                            Aliexpress 3inch
                        </p>
                        <button className="absolute bottom-[2px] left-[3px] h-[21px] rounded-[3px] border border-[#777] bg-gradient-to-b from-[#b8b8b8] to-[#a0a0a0] px-1 text-[#222]">
                            Average the Responses
                        </button>
                    </div>
                </div>
            </div>
            <div className="relative mr-[22px] ml-16 h-[23px] shrink-0 text-[#c0c0c0]">
                {freqLabels.map(([f, label]) => (
                    <span
                        key={f}
                        className={clsx(
                            "absolute top-1 -translate-x-1/2 leading-4",
                            [13000, 15000, 17000].includes(f) && "text-[#6a6a6a]"
                        )}
                        style={{ left: `${freqToPercent(f)}%` }}
                    >
                        {label}
                    </span>
                ))}
                <span
                    className="absolute top-1 -translate-x-1/2 border border-[#7070d0] bg-[#14142a] px-[2px] leading-[13px] text-[#8888e0]"
                    style={{ left: `${freqToPercent(271)}%` }}
                >
                    271
                </span>
            </div>
            <div className="mr-6 ml-[62px] flex h-4 shrink-0">
                <ArrowButton dir="left" />
                <div className="flex flex-1 border-y border-[#666] bg-[#262626]">
                    <div className="w-[27.300%]" />
                    <div className="w-[62.200%] border-x border-[#777] bg-gradient-to-b from-[#c0c0c0] to-[#8c8c8c]" />
                </div>
                <ArrowButton dir="right" />
            </div>
            <div className="mr-[133px] ml-[173px] flex h-[171px] shrink-0">
                <div className="grid flex-1 grid-cols-4 content-start bg-[#101010] pt-[7px] pr-[6px] pl-[3px]">
                    {legend.map((item) => (
                        <LegendItem key={item.name} item={item} />
                    ))}
                </div>
                <VerticalScroll before="h-0" thumb="h-[77px]" after="flex-1" className="ml-1" />
            </div>
        </main>
    );
}

function StatusBar() {
    return (
        <footer className="flex h-[23px] shrink-0 items-stretch border-t-2 border-[#555] bg-[#262626] leading-[22px] whitespace-nowrap text-[#c0c0c0]">
            <span className="w-[78px] border-r border-[#666] pl-[3px]">157/344MB</span>
            <span className="w-[43px] border-r border-[#666] text-center">48 kHz</span>
            <span className="w-[99px] border-r border-[#666] text-center">16-bit in, 16-bit out</span>
            <span className="flex w-[269px] gap-[7px] border-r border-[#666] pl-1 font-['DejaVu_Sans',sans-serif] text-[#5858d8]">
                <span>0000 0000</span>
                <span>0000 0000</span>
                <span>0000 0000</span>
                <span>0000 0000</span>
            </span>
            <span className="ml-2 w-[195px] border-x border-[#666] pl-[3px]">Peak input before clipping 122 dB SPL</span>
            <span className="mr-[204px] flex-1 border-r border-[#666]" />
        </footer>
    );
}

/* ---------- windows taskbar ---------- */

function Taskbar() {
    return (
        <div className="flex h-10 shrink-0 items-stretch overflow-hidden bg-[#2b042f] font-['Open_Sans',sans-serif] text-[#eee]">
            <button aria-label="Start" className="flex w-12 items-center justify-center">
                <svg width="16" height="16" viewBox="0 0 16 16" fill="#fff">
                    <path d="M0 2.300L6.500 1.400V7.600H0ZM7.300 1.300L16 0V7.600H7.300ZM0 8.400H6.500V14.600L0 13.700ZM7.300 8.400H16V16L7.300 14.700Z" />
                </svg>
            </button>
            <div className="flex w-[288px] items-center border border-[#7a5c80] bg-[#5a385f] pl-[11px]">
                <svg width="17" height="17" viewBox="0 0 17 17" fill="none" stroke="#eee" strokeWidth="1.300">
                    <circle cx="10.500" cy="6" r="5" />
                    <path d="M7 9.500L.500 16" />
                </svg>
                <input
                    aria-label="Search"
                    placeholder="Type here to search"
                    className="ml-[11px] w-[160px] bg-transparent text-[14px] placeholder:text-[#e0d8e2]"
                />
                <svg width="78" height="34" viewBox="0 0 78 34" className="ml-auto shrink-0">
                    <defs>
                        <linearGradient id="lake" x1="0" y1="0" x2="1" y2="0">
                            <stop offset="0" stopColor="#e8c8a8" />
                            <stop offset=".4" stopColor="#a8d4e8" />
                            <stop offset="1" stopColor="#58b0e0" />
                        </linearGradient>
                        <radialGradient id="glow">
                            <stop offset="0" stopColor="#f0a060" />
                            <stop offset="1" stopColor="#c06070" stopOpacity="0" />
                        </radialGradient>
                    </defs>
                    <ellipse cx="27" cy="11" rx="24" ry="11" fill="url(#glow)" />
                    <path d="M1 20C1 12 20 13 39 14S77 13 77 21C77 25 70 26 68 29C64 34 15 35 12 29C10 26 1 25 1 20Z" fill="url(#lake)" />
                    <circle cx="27" cy="7" r="4" fill="#f8b050" />
                    <path d="M18 18L20 8L22 19L28 17L31 0L34 16L37 6L40 17L44 12L46 18L53 20L44 22H26Z" fill="#6e5e64" />
                    <path d="M31 2L32 18L34 18Z" fill="#a89aa0" />
                    <path d="M55 21L60 18L61 8L64 20L68 22H55Z" fill="#756870" />
                    <path d="M28 24H44V30Z" fill="#8098a8" opacity=".6" />
                </svg>
            </div>
            <button aria-label="Task view" className="flex w-12 items-center justify-center">
                <svg width="17" height="17" viewBox="0 0 17 17" fill="none" stroke="#ddd">
                    <path d="M1.500 0V3H10.500V0M1.500 5.500H10.500V11.500H1.500ZM1.500 17V14H10.500V17M15.500 0V4M15.500 9V17" />
                    <path d="M14 6.500H17" strokeWidth="3" />
                </svg>
            </button>
            <button aria-label="Chrome" className="ml-[7px] flex w-[41px] items-center justify-center border-b-2 border-[#e49fe8]">
                <svg width="26" height="26" viewBox="0 0 26 26">
                    <circle cx="12" cy="12" r="11.500" fill="#30a050" />
                    <path d="M2 6A11.500 11.500 0 0 1 22.500 7H12A5 5 0 0 0 7.500 14Z" fill="#e04030" />
                    <path d="M22.500 7A11.500 11.500 0 0 1 12 23.500L16.500 14.500L15 7Z" fill="#f8c820" />
                    <circle cx="12" cy="12" r="5.500" fill="#fff" />
                    <circle cx="12" cy="12" r="4.300" fill="#3878e8" />
                    <circle cx="18" cy="18" r="7.500" fill="#5c4038" />
                    <text x="18" y="21" textAnchor="middle" fontSize="8" fill="#eee">M</text>
                </svg>
            </button>
            <button aria-label="File Explorer" className="ml-[9px] flex w-[41px] items-center justify-center border-b-2 border-[#e49fe8]">
                <svg width="24" height="20" viewBox="0 0 24 20">
                    <path d="M1 1H9L11 3H22V8H1Z" fill="#d89c10" />
                    <rect x="1" y="4" width="22" height="14" fill="#f8cc58" />
                    <path d="M5 20V12Q5 10 7 10H17Q19 10 19 12V20H15V14H9V20Z" fill="#3898e0" />
                </svg>
            </button>
            <button aria-label="Outlook" className="flex w-[56px] items-center justify-center">
                <svg width="24" height="24" viewBox="0 0 24 24">
                    <rect x="7" y="1" width="16" height="21" fill="#1878c8" />
                    <path d="M12 2H18V12H12Z" fill="#28a8e8" />
                    <path d="M18 2H23V12H18Z" fill="#50c8f0" />
                    <path d="M8 22L23 12V22Z" fill="#1890d8" />
                    <path d="M8 13L20 23H8Z" fill="#50c0f0" />
                    <rect x="0" y="6" width="12" height="12" rx="1" fill="#0868b8" />
                    <circle cx="6" cy="12" r="2.600" fill="none" stroke="#fff" strokeWidth="1.500" />
                </svg>
            </button>
            <button aria-label="Clipchamp" className="flex w-[44px] items-center justify-center">
                <svg width="24" height="24" viewBox="0 0 24 24">
                    <path d="M7 2H20Q22 2 22 4V17L17 22H4Q2 22 2 20V7Z" fill="#1868e8" stroke="#fff" strokeWidth="1.800" />
                    <path d="M15.500 8.500H13Q9 8.500 9 12T13 15.500H15.500" fill="none" stroke="#fff" strokeWidth="2" />
                </svg>
            </button>
            <button aria-label="REW" className="ml-[3px] flex w-[49px] items-center justify-center border-b-2 border-[#e49fe8] bg-[#570c66]">
                <svg width="24" height="24" viewBox="0 0 24 24">
                    <rect width="24" height="24" fill="#28108c" />
                    <path d="M2 10L4 9L6 17L10 18L11 9L13 16L18 17L23 16V22H2Z" fill="#18b878" />
                    <path d="M2 21L4 14L7 20L11 14L14 19L23 20V22H2Z" fill="#c8d820" />
                    <path d="M9 21L11 16L13 21Z" fill="#e83010" />
                    <text x="12" y="8" textAnchor="middle" fontSize="9" fontWeight="bold" fontFamily="Liberation Sans, sans-serif" fill="#ddd">REW</text>
                </svg>
            </button>
            <svg viewBox="0 0 1140 40" className="h-full min-w-0 flex-1" preserveAspectRatio="none">
                <defs>
                    <linearGradient id="streak" x1="0" y1="0" x2="1" y2="0">
                        <stop offset="0" stopColor="#5a1c44" />
                        <stop offset=".6" stopColor="#400630" />
                        <stop offset="1" stopColor="#581c40" />
                    </linearGradient>
                </defs>
                <path d="M432 0H480Q486 22 493 40H440Q438 18 432 0Z" fill="url(#streak)" />
                <path d="M524 0H544Q550 20 556 40H538Q533 18 524 0Z" fill="url(#streak)" />
            </svg>
            <div className="flex items-center gap-2 pr-2">
                <svg width="12" height="8" viewBox="0 0 12 8" fill="none" stroke="#eee" strokeWidth="1.300">
                    <path d="M1 7L6 1L11 7" />
                </svg>
                <svg width="16" height="16" viewBox="0 0 16 16" fill="none" stroke="#28f010" strokeWidth="2">
                    <path d="M1 0V16M15 0V16M8 0V16M1 8L8 2L15 8M1 10L4 8L8 13L12 8L15 10" />
                </svg>
                <svg width="16" height="16" viewBox="0 0 16 16" fill="none" stroke="#ddd" strokeWidth="1.200">
                    <path d="M1 3L15 1V14H1Z" />
                    <path d="M5 6Q8 4 10 7L5 9V11H9" />
                    <circle cx="12" cy="12" r="4" fill="#2878d0" stroke="none" />
                </svg>
                <svg width="17" height="16" viewBox="0 0 17 16" fill="none" stroke="#ddd">
                    <path d="M.500 6H3L6.500 2.500V13.500L3 10H.500ZM9 5.500Q10.500 8 9 10.500M11.500 3.500Q14 8 11.500 12.500M14 1.500Q17.500 8 14 14.500" />
                </svg>
                <svg width="16" height="16" viewBox="0 0 16 16" fill="none" stroke="#ddd" strokeWidth="1.200">
                    <path d="M5 2.500H15V11.500H2V7M9 12V15M5.500 15H12" />
                    <path d="M1 1H4V6H1Z" />
                </svg>
                <span className="text-[12px]">ENG</span>
            </div>
            <div className="flex w-[64px] flex-col items-center justify-center text-[12px] leading-[18px]">
                <span>03:32</span>
                <span>5/12/2024</span>
            </div>
            <button aria-label="Notifications" className="flex w-[50px] items-center justify-center">
                <svg width="26" height="26" viewBox="0 0 26 26">
                    <path d="M1 1H17V13H7L4 16V13H1Z" fill="#fff" />
                    <path d="M4 5H14M4 8H14M4 11H10" stroke="#2b042f" />
                    <circle cx="17" cy="17" r="8" fill="#4c1c60" stroke="#8060a0" />
                    <text x="17" y="21" textAnchor="middle" fontSize="11" fill="#fff">1</text>
                </svg>
            </button>
            <div className="mr-1 border-l border-[#8a7090]" />
        </div>
    );
}

export default function App() {
    return (
        <div className="flex h-screen min-h-[900px] flex-col overflow-hidden bg-[#3f3f3f] font-['Liberation_Sans',Arial,sans-serif] text-[11px]">
            <header className="relative flex h-[23px] shrink-0 items-center bg-white pl-px font-['Open_Sans',sans-serif] text-[#111]">
                <svg width="16" height="16" viewBox="0 0 16 16">
                    <rect width="16" height="16" fill="#9ab0c4" />
                    <path d="M2 12L7 5L9 2L10 6L14 12L11 15H5Z" fill="#2c2c34" />
                    <path d="M4 13L8 8L12 13Z" fill="#eee" />
                    <circle cx="9" cy="7" r="2" fill="#c82020" />
                </svg>
                <h1 className="ml-1">REW V5.20.13</h1>
                <div className="absolute top-0 left-[44.100%] flex h-px w-[241px]">
                    <span className="w-12 bg-[#a838a8]" />
                    <span className="flex-1 bg-[#555]" />
                </div>
                <div className="ml-auto flex pr-1">
                    <button aria-label="Minimize" className="flex w-[46px] justify-center">
                        <svg width="10" height="10" viewBox="0 0 10 10" stroke="#111"><path d="M0 5.500H10" /></svg>
                    </button>
                    <button aria-label="Restore" className="flex w-[46px] justify-center">
                        <svg width="10" height="10" viewBox="0 0 10 10" fill="none" stroke="#111"><path d="M.500 2.500H7.500V9.500H.500ZM2.500 2.500V.500H9.500V7.500H7.500" /></svg>
                    </button>
                    <button aria-label="Close" className="flex w-[46px] justify-center">
                        <svg width="10" height="10" viewBox="0 0 10 10" stroke="#111"><path d="M0 0L10 10M10 0L0 10" /></svg>
                    </button>
                </div>
            </header>
            <nav className="flex h-[23px] shrink-0 items-center gap-2 border-b border-[#777] bg-[#c0c0c0] pl-[10px] text-[#333]">
                {["File", "Tools", "Preferences", "Graph", "Help", "Donate"].map((m) => (
                    <button key={m}>
                        <span className="underline">{m[0]}</span>
                        {m.slice(1)}
                    </button>
                ))}
                <button>
                    Pro <span className="underline">U</span>pgrades
                </button>
            </nav>
            <div className="flex h-[62px] shrink-0 items-start bg-[#3f3f3f] pt-[5px] pl-1">
                {leftTools.map((t) => (
                    <ToolButton key={t.label} {...t} />
                ))}
                <div className="flex flex-1 justify-center pl-[10px]">
                    {centerTools.map((t) => (
                        <ToolButton key={t.label} {...t} />
                    ))}
                </div>
                <ToolButton
                    label="Preferences"
                    width="w-[86px]"
                    icon={
                        <svg width="32" height="32" viewBox="0 0 32 32">
                            <path d="M4 28L19 11" stroke="#777" strokeWidth="6" strokeLinecap="round" />
                            <path d="M5 27L19 12" stroke="#b8b8b8" strokeWidth="3" strokeLinecap="round" />
                            <path d="M9 23L16 15" stroke="#333" strokeWidth="2" />
                            <path d="M18 14C16 8 20 1 27 1L24 5V9L28 10L31 7C32 13 25 16 20 14Z" fill="#e8e8e8" />
                            <circle cx="4.500" cy="28" r="1.500" fill="#222" />
                        </svg>
                    }
                />
            </div>
            <div className="flex min-h-0 flex-1">
                <Sidebar />
                <GraphArea />
            </div>
            <StatusBar />
            <Taskbar />
        </div>
    );
}
